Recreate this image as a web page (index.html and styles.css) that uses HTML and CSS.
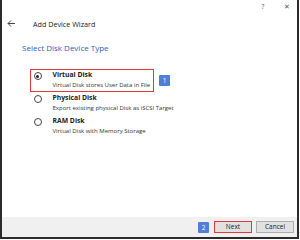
FILE: index.html
```html
<!DOCTYPE html>
<html>
<head>
<meta charset="utf-8">
<link rel="stylesheet" href="styles.css">
</head>
<body>
<div class="window">
  <div class="titlebar">
    <span class="spacer"></span>
    <span class="tb-btn">?</span>
    <span class="tb-btn close">✕</span>
  </div>
  <div class="header">
    <svg class="back" width="8" height="7" viewBox="0 0 8 7"><path d="M8 3.5H1M4 0.5L1 3.5l3 3" fill="none" stroke="#444" stroke-width="1"/></svg>
    <span class="wiz">Add Device Wizard</span>
  </div>
  <div class="content">
    <h1 class="title">Select Disk Device Type</h1>
    <div class="options">
      <div class="opt-row">
        <div class="opt selected">
          <span class="radio checked"></span>
          <div class="opt-text">
            <div class="opt-name">Virtual Disk</div>
            <div class="opt-desc">Virtual Disk stores User Data in File</div>
          </div>
        </div>
        <span class="badge">1</span>
      </div>
      <div class="opt">
        <span class="radio"></span>
        <div class="opt-text">
          <div class="opt-name">Physical Disk</div>
          <div class="opt-desc">Export existing physical Disk as iSCSI Target</div>
        </div>
      </div>
      <div class="opt">
        <span class="radio"></span>
        <div class="opt-text">
          <div class="opt-name">RAM Disk</div>
          <div class="opt-desc">Virtual Disk with Memory Storage</div>
        </div>
      </div>
    </div>
  </div>
  <div class="footer">
    <span class="badge">2</span>
    <button class="btn next">Next</button>
    <button class="btn">Cancel</button>
  </div>
</div>
</body>
</html>
```
FILE: styles.css
```css
html, body { margin: 0; padding: 0; background: #fff; }
body { width: 300px; height: 240px; overflow: hidden; font-family: "Open Sans", "Noto Sans", sans-serif; color: #222; }
.window {
  box-sizing: border-box;
  width: 299px;
  height: 239px;
  border-left: 2px solid #2b2b2b;
  border-right: 2px solid #2b2b2b;
  border-bottom: 2px solid #2b2b2b;
  display: flex;
  flex-direction: column;
  background: #fff;
}
.titlebar { height: 14px; display: flex; align-items: center; padding-right: 0; }
.spacer { flex: 1; }
.tb-btn { font-size: 6.5px; color: #555; width: 24px; text-align: center; line-height: 14px; }
.tb-btn.close { font-size: 7px; margin-right: -2px; }
.header { height: 18px; display: flex; align-items: center; padding-left: 5px; padding-top: 1px; box-sizing: border-box; }
.back { margin-right: 18px; }
.wiz { font-size: 7.2px; color: #222; }
.content { flex: 1; padding-left: 20px; }
.title { margin: 9px 0 0 0; font-weight: normal; font-size: 8px; color: #2e63b8; line-height: 14px; }
.options { margin-top: 14px; padding-left: 8px; display: flex; flex-direction: column; }
.opt-row { display: flex; align-items: center; gap: 5px; }
.opt { box-sizing: border-box; display: flex; align-items: flex-start; padding: 0 4px 0 2.5px; height: 23px; border: 1.5px solid transparent; }
.opt.selected { border-color: #e03a3a; width: 124px; }
.radio { box-sizing: border-box; width: 8px; height: 8px; border: 1px solid #444; border-radius: 50%; margin: 2px 11px 0 0; position: relative; flex: none; }
.radio.checked::after { content: ""; position: absolute; left: 1.5px; top: 1.5px; width: 3px; height: 3px; border-radius: 50%; background: #222; }
.opt-name { font-size: 6.8px; font-weight: bold; line-height: 10px; }
.opt-desc { font-size: 6px; line-height: 10px; color: #333; white-space: nowrap; }
.badge { display: inline-block; background: #4f7fd6; color: #fff; font-size: 6.5px; width: 11px; height: 11px; line-height: 11px; text-align: center; border-radius: 1px; }
.opt-row .badge { margin-top: 0; }
.footer { height: 20px; background: #f0f0f0; display: flex; align-items: center; justify-content: flex-end; padding-right: 3px; gap: 4px; }
.footer .badge { margin-right: 1px; }
.btn { font-family: inherit; font-size: 6.5px; color: #222; width: 38px; height: 12px; padding: 0; background: #e1e1e1; border: 1px solid #adadad; line-height: 10px; }
.btn.next { border: 1.5px solid #e03a3a; }
```
